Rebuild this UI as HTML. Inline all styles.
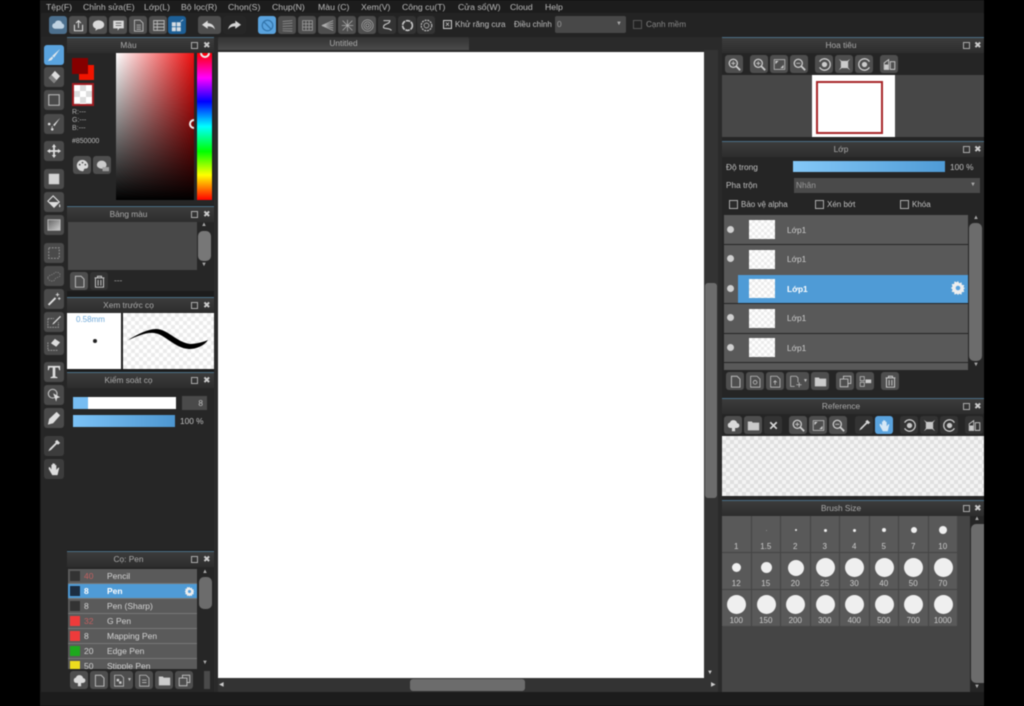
<!DOCTYPE html>
<html lang="vi"><head><meta charset="utf-8"><title>Untitled</title>
<style>
*{box-sizing:border-box}
html,body{margin:0;width:1024px;height:706px;overflow:hidden;background:#000}
body{position:relative;font-family:"Liberation Sans","DejaVu Sans",sans-serif;font-size:8.3px;color:#c0c0c0;filter:blur(.4px)}
div,span,i,svg.a{position:absolute;font-style:normal;white-space:nowrap}
.m{top:1px;font-size:8.700px;line-height:12px;color:#bbb}
.bar{background:#232323}
.b{width:18px;height:18px;background:#4e4e4e;border-radius:3px;display:block}
.b svg{position:absolute;left:2.500px;top:2.500px;width:13px;height:13px;opacity:.88}
.t{width:20px;height:20px;background:#4a4a4a;border-radius:3px}
.t svg{position:absolute;left:3px;top:3px;width:14px;height:14px;opacity:.9}
.hd{height:16px;background:linear-gradient(#3c3c3c,#2d2d2d);border-top:1px solid #4b6f85;text-align:center;line-height:15px;color:#aaa;font-size:8.300px;padding-right:24px}
.pop{top:4px;width:7px;height:7px;border:1px solid #aaa}
.x{top:0;font-size:9px;font-weight:bold;color:#ccc;line-height:15px}
.ck{background-image:repeating-conic-gradient(#ebebeb 0 25%,#fff 0 50%);background-size:8px 8px}
.sb{background:#6c6c6c;border-radius:5px}
.cb{width:9px;height:9px;border:1px solid #aaa;background:#2c2c2c}
.row{left:724px;width:244px;background:#595959}
.dot{left:727px;width:7px;height:7px;border-radius:50%;background:#d0d0d0}
.th{left:749px;width:26px;height:19px;background-size:6px 6px}
.ln{left:787px;color:#ccc}
.br{left:68px;width:129px;height:15px;background:#5a5a5a;border-bottom:1px solid #777;color:#d4d4d4;line-height:14px;font-size:8.500px}
.br b{position:absolute;left:2px;top:2px;width:10px;height:10px;background:#333}
.br em{position:absolute;left:16px;font-style:normal}
.br span{left:39px}
.c{width:28.500px;height:36px;background:#595959}
.c s{position:absolute;background:#efefef;border-radius:50%;display:block}
.c u{position:absolute;left:0;width:100%;text-align:center;text-decoration:none;font-size:8px;color:#ccc;top:26px}
</style></head><body>
<svg width="0" height="0" style="position:absolute"><defs>
<symbol id="new" viewBox="0 0 16 16"><path d="M3 1.500h7l3.500 3.500V15H3z" fill="none" stroke="#ccc" stroke-width="1.200"/></symbol>
<symbol id="fold" viewBox="0 0 16 16"><path d="M1 3h5l1 1.500h8V14H1z" fill="#ddd"/></symbol>
<symbol id="trash" viewBox="0 0 16 16"><path d="M2 3.500h12M5.500 3.500V1.500h5v2M3 3.500h10V15H3zM6.300 6v7M9.700 6v7" fill="none" stroke="#ddd" stroke-width="1.200"/></symbol>
<symbol id="zi" viewBox="0 0 16 16"><circle cx="6.500" cy="6.500" r="5" fill="none" stroke="#ddd" stroke-width="1.600"/><path d="M10 10l5 5" stroke="#ddd" stroke-width="2.200"/><path d="M4 6.500h5M6.500 4v5" stroke="#ddd"/></symbol>
<symbol id="zo" viewBox="0 0 16 16"><circle cx="6.500" cy="6.500" r="5" fill="none" stroke="#ddd" stroke-width="1.600"/><path d="M10 10l5 5" stroke="#ddd" stroke-width="2.200"/><path d="M4 6.500h5" stroke="#ddd"/></symbol>
<symbol id="fit" viewBox="0 0 16 16"><rect x="1.500" y="2" width="13" height="12" fill="none" stroke="#ccc"/><path d="M3 3.500h4L3 7.500zM13 12.500H9l4-4z" fill="#ddd"/></symbol>
<symbol id="rl" viewBox="0 0 16 16"><path d="M2 4.500A7 7 0 1 1 2 11.500" fill="none" stroke="#ddd" stroke-width="1.600"/><circle cx="8" cy="8" r="3.300" fill="#ddd"/></symbol>
<symbol id="rr" viewBox="0 0 16 16"><path d="M14 4.500A7 7 0 1 0 14 11.500" fill="none" stroke="#ddd" stroke-width="1.600"/><circle cx="8" cy="8" r="3.300" fill="#ddd"/></symbol>
<symbol id="rs" viewBox="0 0 16 16"><path d="M1 1l3.500 2.500h7L15 1l-2.500 3.500v7L15 15l-3.500-2.500h-7L1 15l2.500-3.500v-7z" fill="#ddd"/></symbol>
<symbol id="flip" viewBox="0 0 16 16"><path d="M7 2L1.500 6V14H7zM9 4.500h5.500V14H9z" fill="none" stroke="#ddd" stroke-width="1.100"/><path d="M2 8h4.500v5.500H2z" fill="#ddd"/></symbol>
<symbol id="up" viewBox="0 0 16 16"><path d="M4 11a3.300 3.300 0 0 1-.5-6.500A4.700 4.700 0 0 1 12.500 5 3 3 0 0 1 12 11H10v4H6v-4z" fill="#eee"/></symbol>
<symbol id="dup" viewBox="0 0 16 16"><path d="M5.500 4.500V1.500h9v9h-3M1.500 5h9.500v9.500H1.500z" fill="none" stroke="#ccc" stroke-width="1.200"/></symbol>
<symbol id="dd" viewBox="0 0 16 16"><path d="M2 1.500h8l3 3V15H2z" fill="none" stroke="#ccc"/><path d="M4.500 6h3v3h-3zM7.500 9h3v3h-3z" fill="#ddd"/></symbol>
<symbol id="gear" viewBox="0 0 16 16"><path d="M8 1l1.200 2.200 2.400-.8.200 2.500 2.500.2-.8 2.400L15 8l-1.500 1.500.8 2.400-2.500.2-.2 2.500-2.400-.8L8 15l-1.200-1.200-2.400.8-.2-2.500-2.500-.2.800-2.400L1 8l1.500-1.500-.8-2.400 2.500-.2.200-2.500 2.400.8z" fill="#eee"/><circle cx="8" cy="8" r="2.300" fill="#5aa3de"/></symbol>
</defs></svg>

<div style="left:40px;top:0;width:944px;height:706px;background:#1c1c1c"></div>
<span class="m" style="left:46px">Tệp(F)</span>
<span class="m" style="left:83px">Chỉnh sửa(E)</span>
<span class="m" style="left:144px">Lớp(L)</span>
<span class="m" style="left:181px">Bộ lọc(R)</span>
<span class="m" style="left:228px">Chọn(S)</span>
<span class="m" style="left:272px">Chụp(N)</span>
<span class="m" style="left:318px">Màu (C)</span>
<span class="m" style="left:361px">Xem(V)</span>
<span class="m" style="left:402px">Công cụ(T)</span>
<span class="m" style="left:458px">Cửa sổ(W)</span>
<span class="m" style="left:510px">Cloud</span>
<span class="m" style="left:545px">Help</span>
<div class="bar" style="left:41px;top:13px;width:943px;height:24px"></div>
<i class="b" style="left:49px;top:16px;background:#4c6f8d"><svg viewBox="0 0 16 16"><path d="M4 12a3.500 3.500 0 0 1-.5-7A4.700 4.700 0 0 1 12.500 5.500 3.300 3.300 0 0 1 12 12z" fill="#cfe0ee"/></svg></i>
<i class="b" style="left:69px;top:16px"><svg viewBox="0 0 16 16"><path d="M3 7v7.500h10V7M8 11V2M5 5L8 2l3 3" fill="none" stroke="#eee" stroke-width="1.300"/></svg></i>
<i class="b" style="left:89px;top:16px"><svg viewBox="0 0 16 16"><ellipse cx="8" cy="7" rx="7" ry="5.500" fill="#eee"/><path d="M5 11l-1 3.500 5-3z" fill="#eee"/></svg></i>
<i class="b" style="left:109px;top:16px"><svg viewBox="0 0 16 16"><path d="M1.500 2h13v9.500H9l-2 3v-3H1.500z" fill="#eee"/><path d="M4.500 5h7M4.500 8h7" stroke="#555"/></svg></i>
<i class="b" style="left:129px;top:16px"><svg viewBox="0 0 16 16"><path d="M3 1.500h7l3.500 3.500V15H3z" fill="none" stroke="#ccc" stroke-width="1.100"/><path d="M5.500 7.500h5.500M5.500 10h5.500M5.500 12.500h5.500" stroke="#ccc"/></svg></i>
<i class="b" style="left:149px;top:16px"><svg viewBox="0 0 16 16"><path d="M2 2h13v12H2zM2 6h13M2 10h13M6.500 2v12" fill="none" stroke="#ccc" stroke-width="1.100"/></svg></i>
<i class="b" style="left:168px;top:16px;background:#1d5f96"><svg viewBox="0 0 16 16"><path d="M1 4h5v5H1zM7 4h5v5H7zM1 10h5v5H1zM7 10h5v5H7z" fill="#eee"/><path d="M12 3l3-2" stroke="#eee"/></svg></i>
<i class="b" style="left:198px;top:16px;width:23px"><svg style="left:4px" viewBox="0 0 16 16"><path d="M0 7l7-5v3c5 0 8 3 9 8-2-3-5-4-9-4v3z" fill="#eee"/></svg></i>
<i class="b" style="left:223px;top:16px;width:23px;background:#262626"><svg style="left:5px" viewBox="0 0 16 16"><path d="M16 7L9 2v3c-5 0-8 3-9 8 2-3 5-4 9-4v3z" fill="#eee"/></svg></i>
<i class="b" style="left:258px;top:16px;background:#5aa3de"><svg viewBox="0 0 16 16"><circle cx="8" cy="8" r="6.500" fill="none" stroke="#2e6ea3" stroke-width="1.500"/><path d="M3.500 3.500l9 9" stroke="#2e6ea3" stroke-width="1.500"/></svg></i>
<i class="b" style="left:278px;top:16px"><svg viewBox="0 0 16 16"><path d="M2 3l12-1M2 6l12-1M2 9l12-.5M2 12l12 0M2 14.500l12 .5" stroke="#999"/></svg></i>
<i class="b" style="left:298px;top:16px"><svg viewBox="0 0 16 16"><path d="M2 2h12v12H2zM2 6h12M2 10h12M6 2v12M10 2v12" fill="none" stroke="#aaa"/></svg></i>
<i class="b" style="left:318px;top:16px"><svg viewBox="0 0 16 16"><path d="M1 8l14-6M1 8l14 6M1 8h14M1 8l14-3M1 8l14 3" stroke="#bbb"/></svg></i>
<i class="b" style="left:338px;top:16px"><svg viewBox="0 0 16 16"><path d="M2 2l12 12M14 2L2 14M8 1v14M1 8h14" stroke="#bbb" stroke-width=".9"/></svg></i>
<i class="b" style="left:358px;top:16px"><svg viewBox="0 0 16 16"><circle cx="8" cy="8" r="7" fill="none" stroke="#aaa"/><circle cx="8" cy="8" r="4.500" fill="none" stroke="#aaa"/><circle cx="8" cy="8" r="2" fill="none" stroke="#aaa"/></svg></i>
<i class="b" style="left:378px;top:16px;background:#333"><svg viewBox="0 0 16 16"><path d="M3 2h8c0 5-8 3-8 8 0 3 6 0 10 4" fill="none" stroke="#ddd" stroke-width="1.300"/></svg></i>
<i class="b" style="left:398px;top:16px;background:#333"><svg viewBox="0 0 16 16"><circle cx="8" cy="8" r="6" fill="none" stroke="#ddd" stroke-width="2" stroke-dasharray="5.500 1"/></svg></i>
<i class="b" style="left:417px;top:16px;background:#333"><svg viewBox="0 0 16 16"><circle cx="8" cy="8" r="6.500" fill="none" stroke="#ccc" stroke-width="1.500" stroke-dasharray="2.500 1"/><circle cx="8" cy="8" r="3" fill="none" stroke="#ccc"/></svg></i>
<div class="cb" style="left:443px;top:20px;border-color:#ccc;text-align:center;font-size:8px;line-height:7px;color:#ddd">×</div>
<span style="left:455px;top:19px;font-size:8.200px;line-height:11px">Khử răng cưa</span>
<span style="left:514px;top:19px;font-size:8px;line-height:11px">Điều chỉnh</span>
<div style="left:555px;top:16px;width:71px;height:17px;background:#484848;border-radius:2px;color:#999;line-height:17px;padding-left:2px">0<span style="right:4px;top:0;font-size:6px;color:#aaa">▼</span></div>
<div class="cb" style="left:633px;top:20px;border-color:#555;background:#222"></div>
<span style="left:646px;top:19px;font-size:8.200px;line-height:11px;color:#888">Cạnh mềm</span>

<div style="left:41px;top:37px;width:26px;height:655px;background:#262626"></div>
<i class="t" style="left:44px;top:45px;background:#5aa3de"><svg viewBox="0 0 16 16"><path d="M15 1L6 9l2 2z" fill="#eee"/><path d="M6 9.500L3 12l-2 3 4-1 2-2.500z" fill="#eee"/></svg></i>
<i class="t" style="left:44px;top:67px"><svg viewBox="0 0 16 16"><path d="M9 1l6 6-7 8-6-6z" fill="#eee"/><path d="M2 9l6 6 3-3.500-6-6z" fill="#888"/></svg></i>
<i class="t" style="left:44px;top:90px"><svg viewBox="0 0 16 16"><path d="M2 2h12v12H2z" fill="none" stroke="#ccc" stroke-width="1.200"/></svg></i>
<i class="t" style="left:44px;top:114px"><svg viewBox="0 0 16 16"><path d="M15 1L7 9l1.500 1.500zM6.500 10L5 11.500l1 1" fill="#eee"/><circle cx="2.500" cy="8" r="1.500" fill="#eee"/><circle cx="6" cy="14" r="1.500" fill="#eee"/></svg></i>
<i class="t" style="left:44px;top:141px"><svg viewBox="0 0 16 16"><path d="M8 0l2.500 3.500H9V7h3.500V5.500L16 8l-3.500 2.500V9H9v3.500h1.500L8 16l-2.500-3.500H7V9H3.500v1.500L0 8l3.500-2.500V7H7V3.500H5.500z" fill="#eee"/></svg></i>
<i class="t" style="left:44px;top:169px"><svg viewBox="0 0 16 16"><path d="M2 2h12v12H2z" fill="#e4e4e4"/></svg></i>
<i class="t" style="left:44px;top:192px"><svg viewBox="0 0 16 16"><path d="M7 1l7 7-6 6-7-7z" fill="none" stroke="#eee" stroke-width="1.300"/><path d="M2 8h11l-5 6z" fill="#eee"/><path d="M14.500 10c1 2 1 4 0 4s-1-2 0-4z" fill="#eee"/></svg></i>
<i class="t" style="left:44px;top:215px"><svg viewBox="0 0 16 16"><defs><linearGradient id="g1" x1="0" y1="0" x2="1" y2="1"><stop offset="0" stop-color="#666"/><stop offset="1" stop-color="#ddd"/></linearGradient></defs><rect x="1" y="2" width="14" height="12" fill="url(#g1)" stroke="#ccc"/></svg></i>
<i class="t" style="left:44px;top:243px"><svg viewBox="0 0 16 16"><path d="M2 2h12v12H2z" fill="none" stroke="#aaa" stroke-dasharray="2 1.500"/></svg></i>
<i class="t" style="left:44px;top:266px"><svg viewBox="0 0 16 16"><path d="M1 10c0-3 6-3 8-6 2-1 6 0 6 3s-5 2-6 5-8 2-8-2z" fill="none" stroke="#888" stroke-dasharray="1.500 1.200"/></svg></i>
<i class="t" style="left:44px;top:289px"><svg viewBox="0 0 16 16"><path d="M1 14l8-8 1.500 1.500-8 8z" fill="#eee"/><path d="M12 1v4M10 3h4M14 6v3M12.500 7.500h3" stroke="#eee"/></svg></i>
<i class="t" style="left:44px;top:312px"><svg viewBox="0 0 16 16"><path d="M1 4h7M1 4v10h12V8" fill="none" stroke="#aaa" stroke-dasharray="2 1"/><path d="M15 1L7 9l-1 2 2-1 8-8z" fill="#eee"/></svg></i>
<i class="t" style="left:44px;top:335px"><svg viewBox="0 0 16 16"><path d="M1 5v9h12" fill="none" stroke="#aaa" stroke-dasharray="2 1"/><path d="M9 1l6 4-4.500 5-6-4z" fill="#eee"/></svg></i>
<i class="t" style="left:44px;top:362px"><svg viewBox="0 0 16 16"><path d="M1 1h14v5h-1l-1-3H9.500v10l2.500 1v1H4v-1l2.500-1V3H3L2 6H1z" fill="#eee"/></svg></i>
<i class="t" style="left:44px;top:385px"><svg viewBox="0 0 16 16"><circle cx="6.500" cy="6.500" r="5" fill="none" stroke="#ccc" stroke-width="1.300"/><path d="M7 6l8 4.500-3.500 1-1 4z" fill="#eee"/></svg></i>
<i class="t" style="left:44px;top:408px"><svg viewBox="0 0 16 16"><path d="M11 1l4 4-8 9-6 1.500L2.500 9z" fill="#eee"/></svg></i>
<i class="t" style="left:44px;top:436px;background:#3c3c3c"><svg viewBox="0 0 16 16"><path d="M11.500 1l3.500 3.500-2.500 2-1-1-7 7-3 1.500 1.500-3 7-7-1-1z" fill="#eee"/></svg></i>
<i class="t" style="left:44px;top:459px;background:#3c3c3c"><svg viewBox="0 0 16 16"><path d="M2 6h1.500L5 8.500V3h1.300v4V1.500h1.500V7V2h1.500v5V3.500h1.400V9l2-2.500h1.300L12 15H6L2 8z" fill="#eee"/></svg></i>

<div style="left:67px;top:37px;width:147px;height:168px;background:#262626"></div>
<div class="hd" style="left:67px;top:37px;width:147px">Màu<i class="pop" style="left:124px"></i><span class="x" style="left:136px">✖</span></div>
<div style="left:79px;top:65px;width:15px;height:15px;background:#f01400"></div>
<div style="left:72px;top:58px;width:16px;height:16px;background:#850000"></div>
<div class="ck" style="left:72px;top:83px;width:22px;height:23px;border:2px solid #a01c22;background-size:12px 12px;background-image:repeating-conic-gradient(#ddd 0 25%,#fff 0 50%)"></div>
<span style="left:72px;top:109px;font-size:7px;line-height:8px;color:#aaa">R:---<br>G:---<br>B:---</span>
<span style="left:72px;top:138px;font-size:7px;color:#bbb">#850000</span>
<i class="b" style="left:73px;top:156px"><svg viewBox="0 0 16 16"><path d="M8 1a7 7 0 0 0 0 14c2.500 0 1-2.500 2.500-3s4.500.5 4.500-4c0-3.500-3.500-7-7-7z" fill="#eee"/><circle cx="4.500" cy="7" r="1.100" fill="#555"/><circle cx="8" cy="4.500" r="1.100" fill="#555"/><circle cx="11.500" cy="7" r="1.100" fill="#555"/></svg></i>
<i class="b" style="left:93px;top:156px"><svg viewBox="0 0 16 16"><ellipse cx="7" cy="7" rx="6" ry="5" fill="#ddd"/><rect x="8" y="10" width="8" height="5" fill="#aaa"/></svg></i>
<div style="left:116px;top:53px;width:78px;height:147px;overflow:hidden;background:linear-gradient(to top,#000,transparent),linear-gradient(to right,#fff,#ee0f0f)"><div style="left:73px;top:66px;width:10px;height:10px;border:2px solid #eee;border-radius:50%"></div></div>
<div style="left:197px;top:53px;width:15px;height:147px;overflow:hidden;background:linear-gradient(#f00,#f0f 17%,#00f 33%,#0ff 50%,#0f0 67%,#ff0 83%,#f00)"><div style="left:3px;top:-5px;width:10px;height:10px;border:2px solid #eee;border-radius:50%"></div></div>

<div style="left:67px;top:206px;width:147px;height:85px;background:#262626"></div>
<div class="hd" style="left:67px;top:206px;width:147px">Bảng màu<i class="pop" style="left:124px"></i><span class="x" style="left:136px">✖</span></div>
<div style="left:68px;top:222px;width:129px;height:48px;background:#484848"></div>
<div class="sb" style="left:198px;top:231px;width:13px;height:30px;background:#777"></div>
<span style="left:201px;top:222px;font-size:6px;color:#aaa">▲</span><span style="left:201px;top:262px;font-size:6px;color:#aaa">▼</span>
<i class="b" style="left:70px;top:272px"><svg viewBox="0 0 16 16"><use href="#new"/></svg></i>
<i class="b" style="left:90px;top:272px;background:#333"><svg viewBox="0 0 16 16"><use href="#trash"/></svg></i>
<span style="left:114px;top:275px;color:#aaa">---</span>

<div class="hd" style="left:67px;top:297px;width:147px">Xem trước cọ<i class="pop" style="left:124px"></i><span class="x" style="left:136px">✖</span></div>
<div style="left:67px;top:313px;width:54px;height:56px;background:#fff"><span style="left:9px;top:2px;font-size:8px;color:#6ea8d8">0.58mm</span><div style="left:26px;top:26px;width:4px;height:4px;background:#222;border-radius:50%"></div></div>
<div class="ck" style="left:123px;top:313px;width:91px;height:56px"></div>
<svg class="a" style="left:0;top:0" width="1024" height="706"><path d="M128 340C138 334 148 329 156 329C168 329 176 342 190 344C196 344 203 342 208 340C204 346 196 349 189 349C174 348 165 334 154 333C146 332 138 336 128 340Z" fill="#000"/></svg>

<div style="left:67px;top:372px;width:147px;height:178px;background:#262626"></div>
<div class="hd" style="left:67px;top:372px;width:147px">Kiểm soát cọ<i class="pop" style="left:124px"></i><span class="x" style="left:136px">✖</span></div>
<div style="left:73px;top:397px;width:103px;height:12px;background:#fff"><div style="left:0;top:0;width:15px;height:12px;background:#77bdf2"></div></div>
<div style="left:182px;top:396px;width:25px;height:14px;background:#4a4a4a;text-align:right;padding-right:4px;line-height:14px">8</div>
<div style="left:73px;top:415px;width:102px;height:12px;background:linear-gradient(90deg,#7cc2f6,#4d96d0)"></div>
<span style="left:180px;top:416px;line-height:11px">100 %</span>

<div style="left:67px;top:551px;width:147px;height:141px;background:#262626"></div>
<div class="hd" style="left:67px;top:551px;width:147px">Cọ: Pen<i class="pop" style="left:124px"></i><span class="x" style="left:136px">✖</span></div>
<div style="left:68px;top:569px;width:129px;height:100px;overflow:hidden;background:#5a5a5a"></div>
<div class="br" style="top:569px"><b></b><em style="color:#c06060">40</em><span>Pencil</span></div>
<div class="br" style="top:584px;background:#4f9bd6;color:#fff;font-weight:bold"><b style="background:#1c2e42"></b><em>8</em><span>Pen</span><svg class="a" style="left:116px;top:2px" width="11" height="11" viewBox="0 0 16 16"><use href="#gear"/></svg></div>
<div class="br" style="top:599px"><b></b><em>8</em><span>Pen (Sharp)</span></div>
<div class="br" style="top:614px"><b style="background:#ee3b3b"></b><em style="color:#c06060">32</em><span>G Pen</span></div>
<div class="br" style="top:629px"><b style="background:#ee3b3b"></b><em>8</em><span>Mapping Pen</span></div>
<div class="br" style="top:644px"><b style="background:#1ea81e"></b><em>20</em><span>Edge Pen</span></div>
<div class="br" style="top:659px;height:10px;overflow:hidden;border:0"><b style="background:#eedc1e"></b><em>50</em><span>Stipple Pen</span></div>
<div class="sb" style="left:199px;top:577px;width:13px;height:32px;background:#6c6c6c"></div>
<span style="left:202px;top:569px;font-size:6px;color:#aaa">▲</span><span style="left:202px;top:660px;font-size:6px;color:#aaa">▼</span>
<i class="b" style="left:70px;top:671px"><svg viewBox="0 0 16 16"><use href="#up"/></svg></i>
<i class="b" style="left:90px;top:671px"><svg viewBox="0 0 16 16"><use href="#new"/></svg></i>
<i class="b" style="left:110px;top:671px;width:23px"><svg viewBox="0 0 16 16"><use href="#dd"/></svg><span style="left:17px;top:6px;font-size:5px">▼</span></i>
<i class="b" style="left:135px;top:671px"><svg viewBox="0 0 16 16"><path d="M2 1.500h8l3.500 3.500V15H2z" fill="none" stroke="#ccc"/><path d="M5 7.500h5.500M5 10.500h5.500" stroke="#ccc"/></svg></i>
<i class="b" style="left:155px;top:671px"><svg viewBox="0 0 16 16"><use href="#fold"/></svg></i>
<i class="b" style="left:175px;top:671px"><svg viewBox="0 0 16 16"><use href="#dup"/></svg></i>
<div style="left:204px;top:671px;width:6px;height:18px;background:#4a4a4a"></div>

<div style="left:214px;top:37px;width:508px;height:655px;background:#2a2a2a"></div>
<div style="left:218px;top:37px;width:251px;height:13px;background:linear-gradient(#333,#4a4a4a);text-align:center;font-size:8.300px;line-height:13px;color:#aaa;border-radius:2px 2px 0 0">Untitled</div>
<div style="left:218px;top:52px;width:486px;height:626px;background:#fff"></div>
<div style="left:704px;top:50px;width:14px;height:628px;background:#333"></div>
<div style="left:705px;top:283px;width:12px;height:215px;background:#6c6c6c;border-radius:3px"></div>
<span style="left:707px;top:670px;font-size:6px;color:#ccc">▼</span>
<div style="left:218px;top:678px;width:500px;height:14px;background:#333"></div>
<div style="left:410px;top:679px;width:115px;height:12px;background:#6c6c6c;border-radius:3px"></div>
<span style="left:219px;top:681px;font-size:6px;color:#ccc">◀</span><span style="left:711px;top:681px;font-size:6px;color:#ccc">▶</span>

<div style="left:722px;top:37px;width:262px;height:655px;background:#252525"></div>
<div class="hd" style="left:722px;top:37px;width:262px">Hoa tiêu<i class="pop" style="left:241px"></i><span class="x" style="left:252px">✖</span></div>
<i class="b" style="left:725px;top:55px"><svg viewBox="0 0 16 16"><use href="#zi"/></svg></i>
<i class="b" style="left:750px;top:55px"><svg viewBox="0 0 16 16"><use href="#zi"/></svg></i>
<i class="b" style="left:770px;top:55px"><svg viewBox="0 0 16 16"><use href="#fit"/></svg></i>
<i class="b" style="left:790px;top:55px"><svg viewBox="0 0 16 16"><use href="#zo"/></svg></i>
<i class="b" style="left:815px;top:55px"><svg viewBox="0 0 16 16"><use href="#rl"/></svg></i>
<i class="b" style="left:835px;top:55px"><svg viewBox="0 0 16 16"><use href="#rs"/></svg></i>
<i class="b" style="left:855px;top:55px"><svg viewBox="0 0 16 16"><use href="#rr"/></svg></i>
<i class="b" style="left:880px;top:55px"><svg viewBox="0 0 16 16"><use href="#flip"/></svg></i>
<div style="left:722px;top:75px;width:262px;height:62px;background:#474747"></div>
<div style="left:812px;top:75px;width:83px;height:62px;background:#fff"></div>
<div style="left:816px;top:81px;width:67px;height:53px;border:2px solid #a8272a"></div>

<div class="hd" style="left:722px;top:141px;width:262px">Lớp<i class="pop" style="left:241px"></i><span class="x" style="left:252px">✖</span></div>
<span style="left:726px;top:162px;line-height:11px">Độ trong</span>
<div style="left:793px;top:161px;width:152px;height:11px;background:linear-gradient(90deg,#84c8f8,#4f9bd6)"></div>
<span style="left:950px;top:162px;line-height:11px">100 %</span>
<span style="left:726px;top:180px;line-height:11px">Pha trộn</span>
<div style="left:794px;top:178px;width:186px;height:15px;background:#4a4a4a;line-height:15px;padding-left:2px;color:#999">Nhân<span style="right:4px;top:0;font-size:6px;color:#aaa">▼</span></div>
<div class="cb" style="left:729px;top:200px"></div><span style="left:741px;top:199px;line-height:11px;font-size:8px">Bảo vệ alpha</span>
<div class="cb" style="left:815px;top:200px"></div><span style="left:827px;top:199px;line-height:11px;font-size:8px">Xén bớt</span>
<div class="cb" style="left:900px;top:200px"></div><span style="left:912px;top:199px;line-height:11px;font-size:8px">Khóa</span>

<div class="row" style="top:215px;height:29px"></div>
<div class="row" style="top:245px;height:28.500px"></div>
<div class="row" style="top:274px;height:29px"></div>
<div style="left:738px;top:275px;width:230px;height:28px;background:#4f9bd6"></div>
<div class="row" style="top:304px;height:28.500px"></div>
<div class="row" style="top:334px;height:28px"></div>
<div class="row" style="top:363px;height:7px"></div>
<div class="dot" style="top:226px"></div><div class="ck th" style="top:220px"></div><span class="ln" style="top:225px">Lớp1</span>
<div class="dot" style="top:255px"></div><div class="ck th" style="top:250px"></div><span class="ln" style="top:254px">Lớp1</span>
<div class="dot" style="top:285px"></div><div class="ck th" style="top:279px"></div><span class="ln" style="top:284px;color:#fff;font-weight:bold">Lớp1</span>
<svg class="a" style="left:950px;top:280px" width="16" height="16" viewBox="0 0 16 16"><use href="#gear"/></svg>
<div class="dot" style="top:314px"></div><div class="ck th" style="top:309px"></div><span class="ln" style="top:313px">Lớp1</span>
<div class="dot" style="top:344px"></div><div class="ck th" style="top:338px"></div><span class="ln" style="top:343px">Lớp1</span>
<div class="sb" style="left:969px;top:223px;width:13px;height:138px"></div>
<span style="left:973px;top:215px;font-size:6px;color:#aaa">▲</span><span style="left:973px;top:362px;font-size:6px;color:#aaa">▼</span>
<i class="b" style="left:726px;top:372px"><svg viewBox="0 0 16 16"><use href="#new"/></svg></i>
<i class="b" style="left:746px;top:372px"><svg viewBox="0 0 16 16"><path d="M2 1.500h8l3.500 3.500V15H2z" fill="none" stroke="#ccc"/><circle cx="7.500" cy="9" r="2.300" fill="none" stroke="#ccc"/></svg></i>
<i class="b" style="left:766px;top:372px"><svg viewBox="0 0 16 16"><path d="M2 1.500h8l3.500 3.500V15H2z" fill="none" stroke="#ccc"/><path d="M7.500 12V7M5.500 9L7.500 7l2 2" fill="none" stroke="#ccc"/></svg></i>
<i class="b" style="left:786px;top:372px;width:23px"><svg viewBox="0 0 16 16"><path d="M2 1.500h7l2 2V9M2 1.500V14h5M9 12h6.500M12.500 9v6" fill="none" stroke="#ccc"/></svg><span style="left:17px;top:6px;font-size:5px">▼</span></i>
<i class="b" style="left:811px;top:372px"><svg viewBox="0 0 16 16"><use href="#fold"/></svg></i>
<i class="b" style="left:836px;top:372px"><svg viewBox="0 0 16 16"><use href="#dup"/></svg></i>
<i class="b" style="left:856px;top:372px"><svg viewBox="0 0 16 16"><path d="M1.500 2h5v5h-5zM1.500 9h5v5h-5z" fill="none" stroke="#ccc"/><path d="M8 5.500h7V10H8z" fill="#ddd"/></svg></i>
<i class="b" style="left:881px;top:372px"><svg viewBox="0 0 16 16"><use href="#trash"/></svg></i>

<div class="hd" style="left:722px;top:398px;width:262px">Reference<i class="pop" style="left:241px"></i><span class="x" style="left:252px">✖</span></div>
<i class="b" style="left:724px;top:416px"><svg viewBox="0 0 16 16"><use href="#up"/></svg></i>
<i class="b" style="left:744px;top:416px"><svg viewBox="0 0 16 16"><use href="#fold"/></svg></i>
<i class="b" style="left:764px;top:416px;background:#333"><svg viewBox="0 0 16 16"><path d="M4 4l8 8M12 4l-8 8" stroke="#eee" stroke-width="2"/></svg></i>
<i class="b" style="left:789px;top:416px"><svg viewBox="0 0 16 16"><use href="#zi"/></svg></i>
<i class="b" style="left:809px;top:416px"><svg viewBox="0 0 16 16"><use href="#fit"/></svg></i>
<i class="b" style="left:829px;top:416px"><svg viewBox="0 0 16 16"><use href="#zo"/></svg></i>
<i class="b" style="left:855px;top:416px;background:#333"><svg viewBox="0 0 16 16"><path d="M11.500 1l3.500 3.500-2.500 2-1-1-7 7-3 1.500 1.500-3 7-7-1-1z" fill="#eee"/></svg></i>
<i class="b" style="left:875px;top:416px;background:#5aa3de"><svg viewBox="0 0 16 16"><path d="M2 6h1.500L5 8.500V3h1.300v4V1.500h1.500V7V2h1.500v5V3.500h1.400V9l2-2.500h1.300L12 15H6L2 8z" fill="#e8f2fa"/></svg></i>
<i class="b" style="left:900px;top:416px;background:#333"><svg viewBox="0 0 16 16"><use href="#rl"/></svg></i>
<i class="b" style="left:920px;top:416px;background:#333"><svg viewBox="0 0 16 16"><use href="#rs"/></svg></i>
<i class="b" style="left:940px;top:416px;background:#333"><svg viewBox="0 0 16 16"><use href="#rr"/></svg></i>
<i class="b" style="left:965px;top:416px;background:#333"><svg viewBox="0 0 16 16"><use href="#flip"/></svg></i>
<div class="ck" style="left:722px;top:436px;width:262px;height:60px;background-image:repeating-conic-gradient(#e0e0e0 0 25%,#f4f4f4 0 50%)"></div>

<div class="hd" style="left:722px;top:500px;width:262px">Brush Size<i class="pop" style="left:241px"></i><span class="x" style="left:252px">✖</span></div>
<div style="left:722px;top:516px;width:248px;height:176px;background:#454545"></div>
<div class="c" style="left:722px;top:516px"><u>1</u></div>
<div class="c" style="left:751.500px;top:516px"><s style="left:14px;top:14px;width:1px;height:1px;background:#999"></s><u>1.5</u></div>
<div class="c" style="left:781px;top:516px"><s style="left:14px;top:13px;width:2px;height:2px"></s><u>2</u></div>
<div class="c" style="left:810.500px;top:516px"><s style="left:13px;top:13px;width:3px;height:3px"></s><u>3</u></div>
<div class="c" style="left:840px;top:516px"><s style="left:13px;top:13px;width:3px;height:3px"></s><u>4</u></div>
<div class="c" style="left:869.500px;top:516px"><s style="left:12px;top:12px;width:4px;height:4px"></s><u>5</u></div>
<div class="c" style="left:899px;top:516px"><s style="left:11.500px;top:11px;width:6px;height:6px"></s><u>7</u></div>
<div class="c" style="left:928.500px;top:516px"><s style="left:10.500px;top:10px;width:8px;height:8px"></s><u>10</u></div>
<div class="c" style="left:722px;top:553px"><s style="left:10px;top:10px;width:9px;height:9px"></s><u>12</u></div>
<div class="c" style="left:751.500px;top:553px"><s style="left:9px;top:9px;width:11px;height:11px"></s><u>15</u></div>
<div class="c" style="left:781px;top:553px"><s style="left:6.500px;top:6.500px;width:16px;height:16px"></s><u>20</u></div>
<div class="c" style="left:810.500px;top:553px"><s style="left:5px;top:5px;width:19px;height:19px"></s><u>25</u></div>
<div class="c" style="left:840px;top:553px"><s style="left:5px;top:5px;width:19px;height:19px"></s><u>30</u></div>
<div class="c" style="left:869.500px;top:553px"><s style="left:5px;top:5px;width:19px;height:19px"></s><u>40</u></div>
<div class="c" style="left:899px;top:553px"><s style="left:5px;top:5px;width:19px;height:19px"></s><u>50</u></div>
<div class="c" style="left:928.500px;top:553px"><s style="left:5px;top:5px;width:19px;height:19px"></s><u>70</u></div>
<div class="c" style="left:722px;top:590px"><s style="left:5px;top:5px;width:19px;height:19px"></s><u>100</u></div>
<div class="c" style="left:751.500px;top:590px"><s style="left:5px;top:5px;width:19px;height:19px"></s><u>150</u></div>
<div class="c" style="left:781px;top:590px"><s style="left:5px;top:5px;width:19px;height:19px"></s><u>200</u></div>
<div class="c" style="left:810.500px;top:590px"><s style="left:5px;top:5px;width:19px;height:19px"></s><u>300</u></div>
<div class="c" style="left:840px;top:590px"><s style="left:5px;top:5px;width:19px;height:19px"></s><u>400</u></div>
<div class="c" style="left:869.500px;top:590px"><s style="left:5px;top:5px;width:19px;height:19px"></s><u>500</u></div>
<div class="c" style="left:899px;top:590px"><s style="left:5px;top:5px;width:19px;height:19px"></s><u>700</u></div>
<div class="c" style="left:928.500px;top:590px"><s style="left:5px;top:5px;width:19px;height:19px"></s><u>1000</u></div>
<div class="sb" style="left:971px;top:524px;width:13px;height:159px;border-radius:5px 0 0 5px;background:#6c6c6c"></div>
<span style="left:974px;top:516px;font-size:6px;color:#aaa">▲</span><span style="left:974px;top:684px;font-size:6px;color:#aaa">▼</span>
</body></html>
